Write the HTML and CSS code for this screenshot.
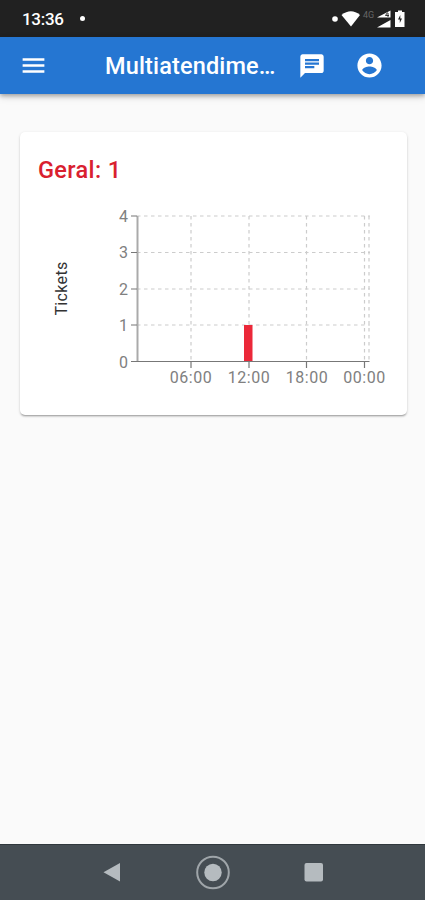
FILE: index.html
```
<!DOCTYPE html>
<html lang="pt-br">
<head>
<meta charset="utf-8">
<meta name="viewport" content="width=device-width, initial-scale=1">
<title>Multiatendimento</title>
<link rel="stylesheet" href="styles.css">
</head>
<body>
<div class="screen">
	<!-- status bar -->
	<div class="status_bar">
		<span class="clock">13:36</span>
		<span class="dot"></span>
		<svg class="status_icons" width="76" height="22" viewBox="330 8 76 22">
			<circle cx="335" cy="19" r="2.800" fill="#fff"/>
			<path d="M341.500 15Q351 7.500 360 15L351 26.500z" fill="#fff"/>
			<text class="net" x="363" y="18">4G</text>
			<path d="M377 17.500L390.500 10.500V17.500zM377 27.500L390.500 20V27.500z" fill="#fff"/>
			<path d="M387.500 12.500L385.500 15.500H389M388 13V17" fill="none" stroke="#222" stroke-width=".9"/>
			<path d="M396 12h2v-1.500h4V12h2.500v15H395V12z" fill="#fff"/>
			<path d="M400.300 15l-2.300 4.500h1.800V23l2.200-4.500h-1.700z" fill="#222"/>
		</svg>
	</div>
	<!-- app bar -->
	<div class="app_bar">
		<svg class="ico_menu" width="29" height="29" viewBox="0 0 24 24"><path d="M3 18h18v-2H3v2zm0-5h18v-2H3v2zm0-7v2h18V6H3z"/></svg>
		<h1 class="title">Multiatendimento</h1>
		<svg class="ico_chat" width="28" height="28" viewBox="0 0 24 24"><path d="M20 2H4c-1.100 0-1.990.9-1.990 2L2 22l4-4h14c1.100 0 2-.9 2-2V4c0-1.100-.9-2-2-2zM6 9h12v2H6V9zm8 5H6v-2h8v2zm4-6H6V6h12v2z"/></svg>
		<svg class="ico_user" width="29" height="29" viewBox="0 0 24 24"><path d="M12 2C6.480 2 2 6.480 2 12s4.480 10 10 10 10-4.480 10-10S17.520 2 12 2zm0 3c1.660 0 3 1.340 3 3s-1.340 3-3 3-3-1.340-3-3 1.340-3 3-3zm0 14.200c-2.500 0-4.710-1.280-6-3.220.030-1.990 4-3.080 6-3.080 1.990 0 5.970 1.090 6 3.080-1.290 1.940-3.500 3.220-6 3.220z"/></svg>
	</div>
	<div class="content">
		<div class="card">
			<h2 class="card_title">Geral: 1</h2>
			<svg class="chart" width="387" height="200" viewBox="20 200 387 200">
				<g class="grid">
					<path d="M137 216H370M137 252.500H370M137 289H370M137 325H370"/>
					<path d="M191 216V361M249 216V361M306.500 216V361M364.500 216V361M369 216V361"/>
				</g>
				<rect x="244" y="325" width="8.500" height="36.500" fill="#eb2839"/>
				<path class="axis_y" d="M137.500 216V361"/>
				<path class="axis" d="M131 361.500H369.500M131 216H137M131 252.500H137M131 289H137M131 325H137M191 361V368M249 361V368M306.500 361V368M364.500 361V368"/>
				<g class="tick tick_y">
					<text x="128.500" y="222">4</text>
					<text x="128.500" y="258">3</text>
					<text x="128.500" y="295">2</text>
					<text x="128.500" y="331">1</text>
					<text x="128.500" y="367.500">0</text>
				</g>
				<g class="tick tick_x">
					<text x="191" y="383">06:00</text>
					<text x="249" y="383">12:00</text>
					<text x="307" y="383">18:00</text>
					<text x="364.500" y="383">00:00</text>
				</g>
				<text class="label" transform="translate(67 288.500) rotate(-90)">Tickets</text>
			</svg>
		</div>
	</div>
	<!-- system buttons -->
	<div class="nav_bar">
		<svg width="36" height="36" viewBox="0 0 36 36"><path d="M9.500 17.200L26 8v18.500z"/></svg>
		<svg width="36" height="36" viewBox="0 0 36 36"><circle class="ring" cx="18" cy="17.500" r="15.800"/><circle cx="18" cy="17.500" r="8.700"/></svg>
		<svg width="36" height="36" viewBox="0 0 36 36"><rect x="8.500" y="8" width="18.500" height="18.500" rx="2"/></svg>
	</div>
</div>
</body>
</html>
```
FILE: styles.css
```
body{margin:0;background:#fafafa;font-family:Roboto,"Liberation Sans",sans-serif;}
h1,h2{margin:0;font-weight:500;}
svg{display:block;flex:none;}

.screen{display:flex;flex-direction:column;width:425px;height:900px;overflow:hidden;}

/* status bar */
.status_bar{display:flex;align-items:center;flex:none;box-sizing:border-box;height:37px;padding:0 19px 0 22px;background:#212121;color:#fff;}
.clock{width:58px;padding-top:1px;font-size:17px;font-weight:500;line-height:20px;letter-spacing:-.3px;}
.dot{width:5px;height:5px;border-radius:50%;background:#fff;}
.status_icons{margin-left:auto;}
.net{fill:#666;font-size:9px;}

/* app bar */
.app_bar{display:flex;align-items:center;flex:none;box-sizing:border-box;height:57px;padding:0 41px 0 19px;background:#2576d2;color:#fff;box-shadow:0 2px 4px rgba(0,0,0,.28),0 3px 8px rgba(0,0,0,.12);}
.app_bar svg{fill:#fff;}
.title{width:172px;margin-left:57px;overflow:hidden;font-size:23.500px;line-height:32px;letter-spacing:.15px;white-space:nowrap;text-overflow:ellipsis;}
.ico_chat{margin-left:21px;}
.ico_user{margin-left:auto;}

/* card */
.content{flex:1;padding:38px 18px 0 20px;}
.card{box-sizing:border-box;height:283px;padding-top:22px;border-radius:5px;background:#fff;box-shadow:0 2px 2px -1px rgba(0,0,0,.3),0 1px 3px rgba(0,0,0,.16);}
.card_title{height:46px;padding-left:18px;color:#d9202f;font-size:23.500px;line-height:32px;letter-spacing:.35px;}

/* chart */
.grid path{fill:none;stroke:#ccc;stroke-width:1.200;stroke-dasharray:3.500 3.500;}
.axis{fill:none;stroke:#777;stroke-width:1.200;}
.axis_y{fill:none;stroke:#aaa;stroke-width:2;}
.tick{fill:#808080;font-size:16px;letter-spacing:.5px;}
.tick_y{text-anchor:end;}
.tick_x{text-anchor:middle;}
.label{fill:#333;font-size:16px;letter-spacing:.35px;text-anchor:middle;}

/* system buttons */
.nav_bar{display:flex;align-items:center;justify-content:center;gap:65px;flex:none;box-sizing:border-box;height:56px;border-top:1px solid #30383d;background:#454d53;}
.nav_bar svg{fill:#b5bbbf;}
.nav_bar .ring{fill:none;stroke:#9fa5a9;stroke-width:2;}
```
